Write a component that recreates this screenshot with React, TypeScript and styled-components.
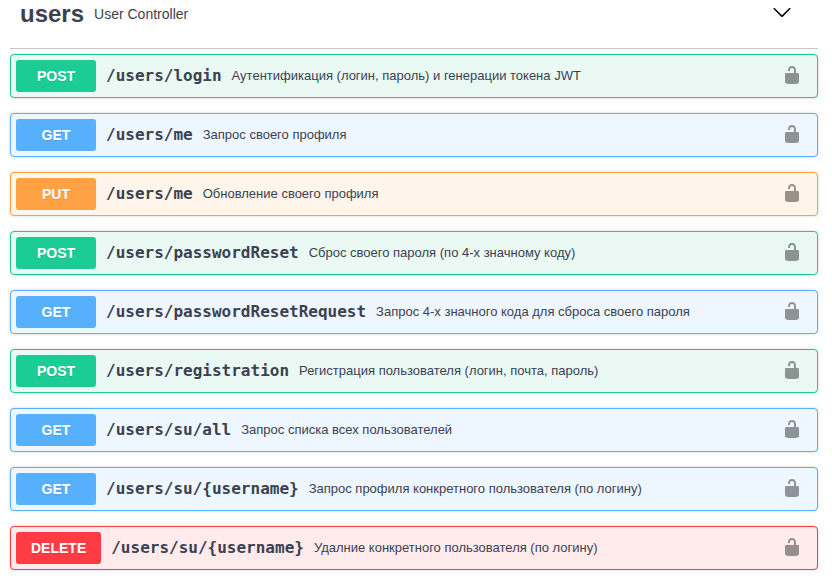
import React from "react";
import styled, { createGlobalStyle } from "styled-components";

type Method = "GET" | "POST" | "PUT" | "DELETE";

const palette: Record<Method, { main: string; tint: string }> = {
  GET: { main: "#57b0fb", tint: "#eef6ff" },
  POST: { main: "#1bcc94", tint: "#eaf9f4" },
  PUT: { main: "#ffa144", tint: "#fff5ea" },
  DELETE: { main: "#ff3b43", tint: "#ffebeb" },
};

const operations: { method: Method; path: string; summary: string }[] = [
  { method: "POST", path: "/users/login", summary: "Аутентификация (логин, пароль) и генерации токена JWT" },
  { method: "GET", path: "/users/me", summary: "Запрос своего профиля" },
  { method: "PUT", path: "/users/me", summary: "Обновление своего профиля" },
  { method: "POST", path: "/users/passwordReset", summary: "Сброс своего пароля (по 4-х значному коду)" },
  { method: "GET", path: "/users/passwordResetRequest", summary: "Запрос 4-х значного кода для сброса своего пароля" },
  { method: "POST", path: "/users/registration", summary: "Регистрация пользователя (логин, почта, пароль)" },
  { method: "GET", path: "/users/su/all", summary: "Запрос списка всех пользователей" },
  { method: "GET", path: "/users/su/{username}", summary: "Запрос профиля конкретного пользователя (по логину)" },
  { method: "DELETE", path: "/users/su/{username}", summary: "Удалние конкретного пользователя (по логину)" },
];

const GlobalStyle = createGlobalStyle`
  * { box-sizing: border-box; }
  body {
    margin: 0;
    background: #fff;
    color: #3b4151;
    font-family: "Liberation Sans", Arial, sans-serif;
    overflow: hidden;
  }
`;

const Page = styled.main`
  width: 832px;
  height: 582px;
  padding: 0 14px 0 10px;
  overflow: hidden;
`;

const TagHeader = styled.header`
  display: flex;
  align-items: flex-start;
  height: 49px;
  padding: 0 26px 0 10px;
  border-bottom: 1px solid rgba(59, 65, 81, 0.3);
  margin-bottom: 5px;
`;

const TagName = styled.h2`
  margin: 0;
  font-size: 24px;
  line-height: 28px;
  font-weight: 700;
`;

const TagDescription = styled.span`
  flex: 1;
  padding: 0 10px;
  font-size: 14px;
  line-height: 28px;
`;

const Chevron = styled.svg`
  width: 20px;
  height: 20px;
  margin-top: 2px;
  fill: #000;
`;

const OperationList = styled.section`
  display: flex;
  flex-direction: column;
  gap: 15px;
`;

const Operation = styled.article<{ $method: Method }>`
  display: flex;
  align-items: flex-start;
  height: 44px;
  padding: 5px 15px 5px 5px;
  border: 1px solid ${(p) => palette[p.$method].main};
  border-radius: 4px;
  background: ${(p) => palette[p.$method].tint};
  box-shadow: 0 0 3px rgba(0, 0, 0, 0.19);
`;

const MethodBadge = styled.span<{ $method: Method }>`
  min-width: 80px;
  padding: 0 15px;
  border-radius: 3px;
  background: ${(p) => palette[p.$method].main};
  color: #fff;
  font-size: 14px;
  font-weight: 700;
  line-height: 32px;
  text-align: center;
  text-shadow: 0 1px 0 rgba(0, 0, 0, 0.1);
`;

const Path = styled.span`
  padding: 0 10px;
  font-family: "DejaVu Sans Mono", monospace;
  font-size: 16px;
  font-weight: 600;
  line-height: 31px;
`;

const Summary = styled.span`
  flex: 1;
  font-size: 13px;
  line-height: 31px;
`;

const Lock = styled.svg`
  width: 20px;
  height: 20px;
  margin-top: 5px;
  opacity: 0.4;
`;

export default function App() {
  return (
    <Page>
      <GlobalStyle />
      <TagHeader>
        <TagName>users</TagName>
        <TagDescription>User Controller</TagDescription>
        <Chevron viewBox="0 0 20 20">
          <path d="M17.418 6.109c.272-.268.709-.268.979 0s.271.701 0 .969l-7.908 7.83c-.27.268-.707.268-.979 0l-7.908-7.83c-.27-.268-.27-.701 0-.969.271-.268.709-.268.979 0L10 13.25l7.418-7.141z" />
        </Chevron>
      </TagHeader>
      <OperationList>
        {operations.map((op) => (
          <Operation key={op.method + op.path} $method={op.method}>
            <MethodBadge $method={op.method}>{op.method}</MethodBadge>
            <Path>{op.path}</Path>
            <Summary>{op.summary}</Summary>
            <Lock viewBox="0 0 20 20">
              <path d="M15.8 8H14V5.6C14 2.703 12.665 1 10 1 7.334 1 6 2.703 6 5.6V6h2v-.801C8 3.754 8.797 3 10 3c1.203 0 2 .754 2 2.199V8H4c-.553 0-1 .646-1 1.199V17c0 .549.428 1.139.951 1.307l1.197.387C5.672 18.861 6.55 19 7.1 19h5.8c.549 0 1.428-.139 1.951-.307l1.196-.387c.524-.167.953-.757.953-1.306V9.199C17 8.646 16.352 8 15.8 8z" />
            </Lock>
          </Operation>
        ))}
      </OperationList>
    </Page>
  );
}
